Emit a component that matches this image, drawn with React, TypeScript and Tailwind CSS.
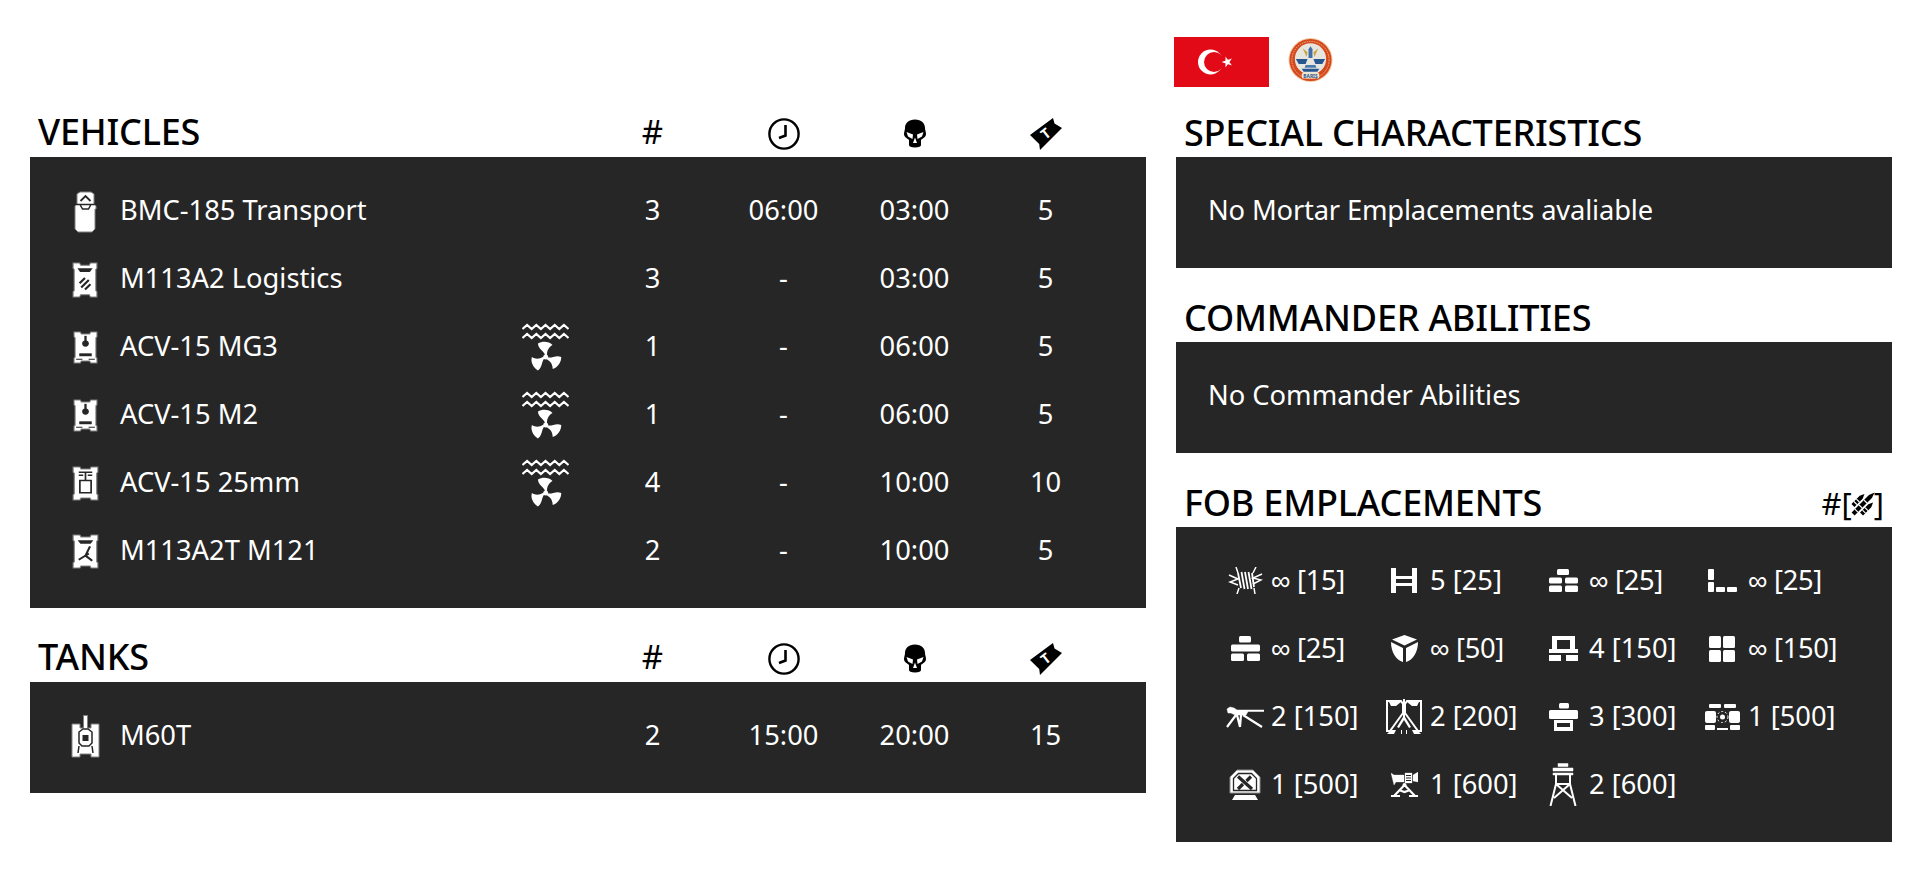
const font = "font-['Noto_Sans',sans-serif]";
const dark = "#262626";

function Clock() {
  return (
    <svg width="32" height="32" viewBox="0 0 32 32" fill="none" stroke="#000" strokeWidth="2.400">
      <circle cx="16" cy="16" r="14.600" />
      <path d="M17.500 7v10.500l-6.500 2.500" strokeWidth="2.600" />
    </svg>
  );
}

function Skull() {
  return (
    <svg width="22" height="29" viewBox="0 0 22 29">
      <path d="M11 .5C4.500.5 1 4.500 1 9c0 2-1 4-1 6 0 3 3 4 5 6v5c0 1.500 2 2.500 6 2.500s6-1 6-2.500v-5c2-2 5-3 5-6 0-2-1-4-1-6 0-4.500-3.500-8.500-10-8.500z" fill="#000" />
      <path d="M2.500 13l6.500 2.500L8.500 20 4 17.500zM19.500 13L13 15.500l.5 4.500 4.500-2.500zM11 18.500l2 5.500H9z" fill="#fff" />
    </svg>
  );
}

function Ticket() {
  return (
    <svg width="32" height="32" viewBox="0 0 32 32">
      <path d="M0 17L23 0l1.500 5.500L32 10 10 32l-.8-6z" fill="#000" />
      <text x="16" y="20.500" textAnchor="middle" fontSize="14" fontWeight="700" fill="#fff" transform="rotate(-38 16 16)" fontFamily="'Noto Sans',sans-serif">T</text>
    </svg>
  );
}

function Body({ w, h, children }: { w: number; h: number; children?: React.ReactNode }) {
  return (
    <svg width={w} height={h} viewBox="0 0 24 34" preserveAspectRatio="none">
      <path d="M1 1h6l1 2h8l1-2h6v5l-1 1v20l1 1v5h-6l-1-2H8l-1 2H1v-5l1-1V7L1 6z" fill="#fff" stroke="#808080" strokeWidth="1" />
      {children}
    </svg>
  );
}

function Transport() {
  return (
    <svg width="25" height="42" viewBox="0 0 25 42">
      <path d="M4 3l3-2h11l3 2v10l2 2v3h-1v20l-3 3H5l-3-3V18H2v-3l2-2z" fill="#fff" stroke="#808080" strokeWidth="1" />
      <path d="M7.500 10l5-5 5 5" fill="none" stroke={dark} strokeWidth="1.800" />
      <path d="M3 13.500h19M7 13.500l2.500 4.500h6l2.500-4.500" fill="none" stroke={dark} strokeWidth="1.500" />
    </svg>
  );
}

function Logistics() {
  return (
    <Body w={26} h={36}>
      <path d="M5 6h14l-2.500 3.500h-9z" fill={dark} />
      <path d="M7 20l5-5M8.500 24l7-7M12 26l5-5" stroke={dark} strokeWidth="2" />
    </Body>
  );
}

function Acv() {
  return (
    <Body w={25} h={33}>
      <path d="M12 5v6" stroke={dark} strokeWidth="2.200" />
      <circle cx="12" cy="13" r="3.200" fill={dark} />
      <path d="M6 23h12v3H6z" fill={dark} />
      <path d="M3 29h6M15 29h6" stroke={dark} strokeWidth="1" />
    </Body>
  );
}

function Acv25() {
  return (
    <Body w={27} h={35}>
      <path d="M6 6h12M6 9h4M14 9h4M12 6v8" stroke={dark} strokeWidth="1.500" />
      <path d="M7 14h10v12H7z" fill="#fff" stroke={dark} strokeWidth="1.500" />
    </Body>
  );
}

function M121() {
  return (
    <Body w={27} h={35}>
      <path d="M5 6h14l-2.500 3.500h-9z" fill={dark} />
      <path d="M6 25l9-6M16 12l-4 9 6 5" stroke={dark} strokeWidth="1.900" fill="none" />
    </Body>
  );
}

function Tank() {
  return (
    <svg width="29" height="43" viewBox="0 0 29 43">
      <path d="M1 9h8v4h3.500V.5h4V13H20V9h8v33h-8v-3H9v3H1z" fill="#fff" stroke="#808080" strokeWidth="1" />
      <path d="M8 17l4-3h5l4 3v11l-3 3h-7l-3-3zM8 31l-1 7M21 31l1 7" fill="none" stroke={dark} strokeWidth="1.500" />
      <path d="M11.500 20h6v6h-6z" fill={dark} />
    </svg>
  );
}

function Amphibious() {
  const blade = "M23 32C22 28 16 26 16 20.500 20 18 27 18 30.500 22 27 24 25 27 25 32z";
  return (
    <svg width="47" height="49" viewBox="0 0 47 49" fill="#fff">
      <path d="M.5 6l4.600-4 4.600 4 4.600-4 4.600 4 4.600-4 4.600 4 4.600-4 4.600 4 4.600-4 4.600 4M.5 15l4.600-4 4.600 4 4.600-4 4.600 4 4.600-4 4.600 4 4.600-4 4.600 4 4.600-4 4.600 4" fill="none" stroke="#fff" strokeWidth="2.200" />
      <circle cx="23.700" cy="34" r="2.500" />
      <path d={blade} />
      <path d={blade} transform="rotate(120 23.700 34)" />
      <path d={blade} transform="rotate(240 23.700 34)" />
    </svg>
  );
}

function Rounds() {
  return (
    <svg width="28" height="28" viewBox="0 0 24 24" fill="#000" className="-mx-[3px]">
      <g transform="rotate(45 12 12)">
        <path d="M5 9l1.800-4 1.800 4v10H5zM10.200 3L12-2l1.800 5v21h-3.600zM15.400 9l1.800-4 1.800 4v10h-3.600z" />
        <path d="M5 13h3.600M5 16h3.600M10.200 9h3.600M10.200 15h3.600M10.200 20h3.600M15.400 13h3.600M15.400 16h3.600" stroke="#fff" strokeWidth="1" />
      </g>
    </svg>
  );
}

function Wire() {
  return (
    <svg width="35" height="27" viewBox="0 0 35 27" stroke="#fff" fill="none">
      <path d="M10 6l3 15M13.500 5l3 17M17 5l3 17M20.500 5l3 17M24 6l2 14" strokeWidth="1.800" />
      <path d="M1 8l9 4-8 3 8 3M34 7l-9 4 8 2-8 4M10 6L8 0M11 21l-2 6M25 6l3-6M26 21l1 6" strokeWidth="1.500" />
    </svg>
  );
}

function Hedgehog() {
  return (
    <svg width="26" height="25" viewBox="0 0 26 25" fill="#fff">
      <path d="M0 0h5v25H0zM21 0h5v25h-5zM4 8h18v3H4zM4 15h18v3H4z" />
    </svg>
  );
}

function Bricks3() {
  return (
    <svg width="29" height="23" viewBox="0 0 29 23" fill="#fff">
      <rect x="8" y="0" width="12" height="6" rx="1.500" />
      <rect x="0" y="8.500" width="13" height="6" rx="1.500" />
      <rect x="16" y="8.500" width="13" height="6" rx="1.500" />
      <rect x="0" y="16.500" width="13" height="6.500" rx="1.500" />
      <rect x="16" y="16.500" width="13" height="6.500" rx="1.500" />
    </svg>
  );
}

function Corner() {
  return (
    <svg width="29" height="23" viewBox="0 0 29 23" fill="#fff">
      <rect x="0" y="0" width="6" height="11" rx="1" />
      <rect x="0" y="13" width="6" height="10" rx="1" />
      <rect x="8" y="18" width="9" height="5" rx="1" />
      <rect x="19" y="18" width="10" height="5" rx="1" />
    </svg>
  );
}

function Bricks6() {
  return (
    <svg width="29" height="25" viewBox="0 0 29 25" fill="#fff">
      <rect x="8" y="0" width="12" height="6.500" rx="1.500" />
      <rect x="0" y="8.500" width="29" height="7" rx="1.500" />
      <rect x="0" y="17.500" width="13" height="7.500" rx="1.500" />
      <rect x="16" y="17.500" width="13" height="7.500" rx="1.500" />
    </svg>
  );
}

function Crate() {
  return (
    <svg width="27" height="27" viewBox="0 0 27 27" fill="#fff">
      <path d="M13.500 0L26 4.500 13.500 10.500 1 4.500zM0 7l12 6v14C5 25 0 17 0 7zM27 7l-12 6v14C22 25 27 17 27 7z" />
    </svg>
  );
}

function Bunker() {
  return (
    <svg width="29" height="25" viewBox="0 0 29 25" fill="#fff">
      <path d="M3 0h23v13h-5V4H8v9H3zM0 13h29v4H0zM0 19h12v6H0zM17 19h12v6H17z" />
    </svg>
  );
}

function Tiles() {
  return (
    <svg width="26" height="26" viewBox="0 0 26 26" fill="#fff">
      <rect x="0" y="0" width="12" height="12" rx="1.500" />
      <rect x="14" y="0" width="12" height="12" rx="1.500" />
      <rect x="0" y="14" width="12" height="12" rx="1.500" />
      <rect x="14" y="14" width="12" height="12" rx="1.500" />
    </svg>
  );
}

function Hmg() {
  return (
    <svg width="38" height="22" viewBox="0 0 38 22" fill="#fff" stroke="#fff">
      <path d="M1 3l3-2 4 1 3 2h27v1.500H22L20 9H9L5 7H2z" strokeWidth=".5" />
      <path d="M10 9L1 21M15 9l-1 12M17 9l19 12M11 9l3 12" strokeWidth="2.200" fill="none" />
    </svg>
  );
}

function Hab() {
  return (
    <svg width="36" height="35" viewBox="0 0 36 35" fill="#fff">
      <path d="M1 2h14l2 3v9L4 32H1zM35 2H21l-2 3v9l13 18h3z" fill="none" stroke="#fff" strokeWidth="2" />
      <path d="M3 3h12l-5 4H5zM33 3H21l5 4h5zM17 0h2v18l6 10-2 1-5-8-5 8-2-1 6-10z" />
      <path d="M1 35l4-4h5l-2 4zM35 35l-4-4h-5l2 4zM15 35v-4h1v4zM20 35v-4h1v4z" />
    </svg>
  );
}

function Ammo() {
  return (
    <svg width="29" height="28" viewBox="0 0 29 28" fill="#fff">
      <rect x="10" y="0" width="10" height="5.500" rx="1.500" />
      <rect x="0" y="7" width="29" height="9" rx="1.500" />
      <path d="M5 17h19v11H5zM8 20v4h13v-4z" fillRule="evenodd" />
    </svg>
  );
}

function Ied() {
  return (
    <svg width="35" height="26" viewBox="0 0 35 26" fill="#fff">
      <rect x="4" y="0" width="12" height="4" rx="1" />
      <rect x="19" y="0" width="12" height="4" rx="1" />
      <rect x="0" y="7" width="11" height="12" rx="2" />
      <rect x="24" y="7" width="11" height="12" rx="2" />
      <circle cx="17.500" cy="13" r="2.500" />
      <circle cx="17.500" cy="13" r="5.500" fill="none" stroke="#fff" strokeWidth="1" strokeDasharray="2 2" />
      <rect x="0" y="21" width="10" height="5" rx="1" />
      <rect x="12" y="24" width="11" height="2" />
      <rect x="25" y="21" width="10" height="5" rx="1" />
    </svg>
  );
}

function Repair() {
  return (
    <svg width="32" height="31" viewBox="0 0 32 31">
      <path d="M1 8l7-7h16l7 7v16H1z" fill="#fff" stroke="#8a8a8a" strokeWidth="1" />
      <path d="M4.500 9.500L9.500 4.500h13l5 5v12h-23z" fill="#fff" stroke={dark} strokeWidth="1.300" />
      <path d="M9 7.500L23 20M9 20l5-5M17.500 12L22 7.500" stroke={dark} strokeWidth="3.200" fill="none" />
      <path d="M3 31l3-5h20l3 5z" fill="#fff" />
    </svg>
  );
}

function Mortar() {
  return (
    <svg width="27" height="25" viewBox="0 0 27 25" fill="#fff" stroke="#fff">
      <path d="M0 1l3 2h10v7H5l-2 3zM14 1h7v10h-7zM22 3l5-3v10l-5-1z" strokeWidth=".3" />
      <path d="M15 3.500h5M15 6h5M15 8.500h5" stroke={dark} strokeWidth="1" />
      <path d="M13.500 13L3 24M13.500 13L24 24M8 18l5.500 2 5.500-2M0 24.200h9M18 24.200h9" strokeWidth="2.200" fill="none" />
      <circle cx="13.500" cy="13" r="2" stroke="none" />
    </svg>
  );
}

function Tower() {
  return (
    <svg width="28" height="43" viewBox="0 0 28 43" fill="none" stroke="#fff">
      <path d="M9 .5h10v3H9zM4 5h20v3H4zM4 10h20v2H4z" fill="#fff" strokeWidth=".5" />
      <path d="M7 12v9h14v-9" strokeWidth="2" />
      <path d="M7 21L1.500 43M21 21l5.500 22M7 21l16 14M21 21L5 35" strokeWidth="2" />
    </svg>
  );
}

function Flag() {
  return (
    <svg width="95" height="50" viewBox="0 0 95 50">
      <rect width="95" height="50" fill="#e30a17" />
      <circle cx="36.500" cy="25" r="12.500" fill="#fff" />
      <circle cx="40" cy="25" r="10" fill="#e30a17" />
      <path d="M47.500 25l10.400-3.400-6.400 8.900v-11l6.400 8.900z" fill="#fff" />
    </svg>
  );
}

function Emblem() {
  return (
    <svg width="45" height="46" viewBox="0 0 46 46">
      <circle cx="23" cy="23" r="22.500" fill="#efc9a0" />
      <circle cx="23" cy="23" r="21.500" fill="#d4481c" />
      <circle cx="23" cy="23" r="19" fill="none" stroke="#f0b090" strokeWidth="1" strokeDasharray="1.500 1" />
      <circle cx="23" cy="22" r="16" fill="#e6e6df" />
      <path d="M23 9l2 3v9h-4v-9z" fill="#3f6ea8" />
      <path d="M15 11l5 4-1 5zM31 11l-5 4 1 5z" fill="#c9a545" />
      <path d="M8 22h12l-2 5H11zM38 22H26l2 5h7z" fill="#27558f" />
      <path d="M18 28h10l1 3h-12z" fill="#4a78ad" />
      <path d="M14 32h18l-2 3H16z" fill="#27558f" />
      <rect x="14" y="36" width="18" height="6" rx="2" fill="#f4e7cf" />
      <text x="23" y="41" textAnchor="middle" fontSize="5" fontWeight="700" fill="#27558f" fontFamily="'Noto Sans',sans-serif">BARIŞ</text>
    </svg>
  );
}

type Vehicle = {
  icon: React.ReactNode;
  name: string;
  amphibious?: boolean;
  count: string;
  delay: string;
  respawn: string;
  tickets: string;
};

const vehicles: Vehicle[] = [
  { icon: <Transport />, name: "BMC-185 Transport", count: "3", delay: "06:00", respawn: "03:00", tickets: "5" },
  { icon: <Logistics />, name: "M113A2 Logistics", count: "3", delay: "-", respawn: "03:00", tickets: "5" },
  { icon: <Acv />, name: "ACV-15 MG3", amphibious: true, count: "1", delay: "-", respawn: "06:00", tickets: "5" },
  { icon: <Acv />, name: "ACV-15 M2", amphibious: true, count: "1", delay: "-", respawn: "06:00", tickets: "5" },
  { icon: <Acv25 />, name: "ACV-15 25mm", amphibious: true, count: "4", delay: "-", respawn: "10:00", tickets: "10" },
  { icon: <M121 />, name: "M113A2T M121", count: "2", delay: "-", respawn: "10:00", tickets: "5" },
];

const tanks: Vehicle[] = [
  { icon: <Tank />, name: "M60T", count: "2", delay: "15:00", respawn: "20:00", tickets: "15" },
];

const emplacements: [React.ReactNode, string][] = [
  [<Wire />, "∞ [15]"],
  [<Hedgehog />, "5 [25]"],
  [<Bricks3 />, "∞ [25]"],
  [<Corner />, "∞ [25]"],
  [<Bricks6 />, "∞ [25]"],
  [<Crate />, "∞ [50]"],
  [<Bunker />, "4 [150]"],
  [<Tiles />, "∞ [150]"],
  [<Hmg />, "2 [150]"],
  [<Hab />, "2 [200]"],
  [<Ammo />, "3 [300]"],
  [<Ied />, "1 [500]"],
  [<Repair />, "1 [500]"],
  [<Mortar />, "1 [600]"],
  [<Tower />, "2 [600]"],
];

function SectionHead({ title, right }: { title: string; right?: React.ReactNode }) {
  return (
    <div className="flex h-[47px] items-end justify-between pb-[1px] pl-2 pr-2">
      <h2 className="text-[36px] font-medium leading-[47px] tracking-[-0.2px] text-black">{title}</h2>
      {right}
    </div>
  );
}

function VehicleSection({ title, rows }: { title: string; rows: Vehicle[] }) {
  return (
    <section>
      <div className="grid h-[47px] grid-cols-[469px_80px_131px_131px_131px_131px] items-center pl-2 text-[33px] text-black">
        <h2 className="mb-[3px] text-[36px] font-medium leading-[44px] tracking-[-0.2px]">{title}</h2>
        <div />
        <div className="mb-[3px] text-center leading-[44px]">#</div>
        <div className="flex justify-center"><Clock /></div>
        <div className="flex justify-center"><Skull /></div>
        <div className="flex justify-center"><Ticket /></div>
      </div>
      <div className="bg-[#262626] pt-[19px] pb-[24px] text-white">
        {rows.map((v) => (
          <div key={v.name} className="grid h-[68px] grid-cols-[90px_387px_80px_131px_131px_131px_131px] items-center text-[27.3px]">
            <div className="mt-[3px] flex justify-center pl-[20px]">{v.icon}</div>
            <div>{v.name}</div>
            <div className="mt-[3px] flex justify-center pr-[4px]">{v.amphibious && <Amphibious />}</div>
            <div className="text-center">{v.count}</div>
            <div className="text-center">{v.delay}</div>
            <div className="text-center">{v.respawn}</div>
            <div className="text-center">{v.tickets}</div>
          </div>
        ))}
      </div>
    </section>
  );
}

function NotePanel({ title, text, tight }: { title: string; text: string; tight?: boolean }) {
  return (
    <section>
      <SectionHead title={title} />
      <div className="bg-[#262626] pt-[19px] pb-[24px] pl-8 text-white">
        <div className={tight ? "flex h-[68px] items-center text-[27.3px] tracking-[-0.15px]" : "flex h-[68px] items-center text-[27.3px]"}>{text}</div>
      </div>
    </section>
  );
}

export default function App() {
  return (
    <div className={`${font} grid h-[869px] grid-cols-[1116px_716px] gap-x-[30px] overflow-hidden bg-white pl-[30px]`}>
      <div className="flex flex-col gap-[27px] pt-[110px]">
        <VehicleSection title="VEHICLES" rows={vehicles} />
        <VehicleSection title="TANKS" rows={tanks} />
      </div>
      <div>
        <div className="flex h-[110px] items-start gap-[19px] pt-[37px]">
          <div className="-ml-[2px]"><Flag /></div>
          <Emblem />
        </div>
        <div className="flex flex-col gap-[27px]">
          <NotePanel title="SPECIAL CHARACTERISTICS" text="No Mortar Emplacements avaliable" tight />
          <NotePanel title="COMMANDER ABILITIES" text="No Commander Abilities" />
          <section>
            <SectionHead
              title="FOB EMPLACEMENTS"
              right={
                <div className="flex items-center text-[31px] leading-[45px] text-black">
                  #[<Rounds />]
                </div>
              }
            />
            <div className="grid grid-cols-[159px_159px_159px_159px] bg-[#262626] pt-[19px] pb-[24px] pl-[49px] text-white">
              {emplacements.map(([icon, label], i) => (
                <div key={i} className="flex h-[68px] items-center gap-[6px] text-[27.3px]">
                  <div className="mt-[1px] flex w-[40px] shrink-0 justify-center">{icon}</div>
                  <span className={label.startsWith("∞") ? "whitespace-nowrap tracking-[-0.3px]" : "whitespace-nowrap"}>{label}</span>
                </div>
              ))}
            </div>
          </section>
        </div>
      </div>
    </div>
  );
}
